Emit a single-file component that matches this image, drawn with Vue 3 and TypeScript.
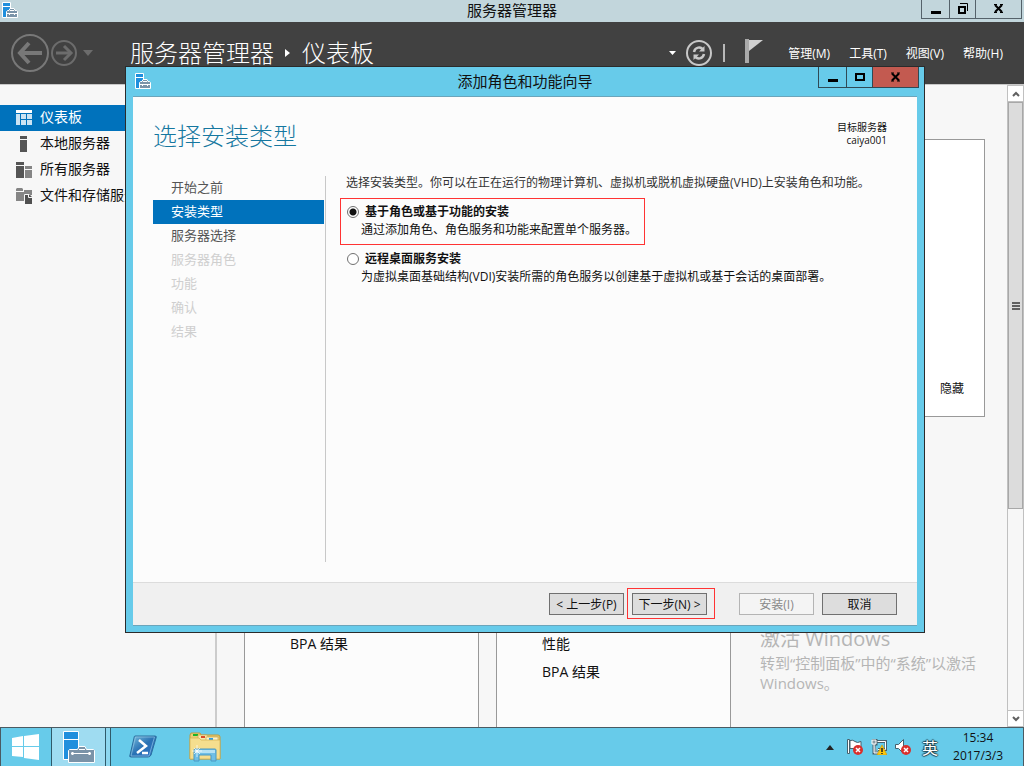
<script setup lang="ts">
import { ref } from 'vue'

interface Step {
  label: string
  disabled: boolean
}

interface InstallOption {
  id: string
  title: string
  description: string
}

const sidebar = [
  { icon: 'dashboard', label: '仪表板' },
  { icon: 'server', label: '本地服务器' },
  { icon: 'servers', label: '所有服务器' },
  { icon: 'storage', label: '文件和存储服务' },
]
const activePage = ref('dashboard')

const menus = ['管理(M)', '工具(T)', '视图(V)', '帮助(H)']

const steps: Step[] = [
  { label: '开始之前', disabled: false },
  { label: '安装类型', disabled: false },
  { label: '服务器选择', disabled: false },
  { label: '服务器角色', disabled: true },
  { label: '功能', disabled: true },
  { label: '确认', disabled: true },
  { label: '结果', disabled: true },
]
const currentStep = ref(1)

const options: InstallOption[] = [
  {
    id: 'role',
    title: '基于角色或基于功能的安装',
    description: '通过添加角色、角色服务和功能来配置单个服务器。',
  },
  {
    id: 'rds',
    title: '远程桌面服务安装',
    description: '为虚拟桌面基础结构(VDI)安装所需的角色服务以创建基于虚拟机或基于会话的桌面部署。',
  },
]
const selected = ref('role')

const tiles = [['BPA 结果'], ['性能', 'BPA 结果']]
</script>

<template>
  <div class="desktop">
    <svg class="defs" width="0" height="0" aria-hidden="true">
      <symbol id="manager-small" viewBox="0 0 16 16">
        <path d="M.5.5h8v15h-8z" fill="#1f8fdd" stroke="#fff" />
        <path d="M1 4.5h7" stroke="#fff" />
        <path d="M4.500 15.500V9.500l1-1h1.500l1-2h4l1 2h1.500l1 1v6z" fill="#7a93a8" stroke="#fff" />
        <path d="M5 11.500h10M7.500 11v2M12.500 11v2M8 8.500h4" stroke="#fff" fill="none" />
      </symbol>
    </svg>

    <header class="caption">
      <svg class="caption-icon" width="16" height="16"><use href="#manager-small" /></svg>
      <span class="caption-title">服务器管理器</span>
      <div class="window-buttons">
        <button class="wb min" aria-label="最小化"><svg width="12" height="12"><path d="M1 8h10v3H1z" /></svg></button>
        <button class="wb mid" aria-label="还原">
          <svg width="12" height="12"><path d="M2 4h6v6H2z" fill="none" stroke="#000" stroke-width="2" /><path d="M3 .5h7.500V8" fill="none" stroke="#000" /></svg>
        </button>
        <button class="wb close" aria-label="关闭">
          <svg width="12" height="12"><path d="M2 2l7 7M9 2l-7 7" stroke="#000" stroke-width="2" /><path d="M1 1.500h3M7 1.500h3M1 9.500h3M7 9.500h3" stroke="#000" stroke-width="1" /></svg>
        </button>
      </div>
    </header>

    <div class="toolbar">
      <button class="plain" aria-label="后退">
        <svg width="38" height="38" fill="none" stroke="#787878">
          <circle cx="19" cy="19" r="18" stroke-width="2" />
          <path d="M31 19H10" stroke-width="4" /><path d="M18 9L9 19l9 10" stroke-width="4" />
        </svg>
      </button>
      <button class="plain forward" aria-label="前进">
        <svg width="26" height="26" fill="none" stroke="#6c6c6c">
          <circle cx="13" cy="13" r="12" stroke-width="2" />
          <path d="M5 13h14" stroke-width="3" /><path d="M13 6l7 7-7 7" stroke-width="3" />
        </svg>
      </button>
      <button class="plain history" aria-label="历史记录">
        <svg width="10" height="6"><path d="M0 0h10L5 6z" fill="#6c6c6c" /></svg>
      </button>
      <div class="breadcrumb">
        <span>服务器管理器</span>
        <svg width="6" height="8"><path d="M0 0l5 4-5 4z" fill="#fff" /></svg>
        <span>仪表板</span>
      </div>
      <div class="tools">
        <button class="plain" aria-label="更多"><svg width="7" height="4"><path d="M0 0h7L3.500 4z" fill="#fff" /></svg></button>
        <button class="plain refresh" aria-label="刷新">
          <svg width="26" height="26" fill="none" stroke="#c8c8c8">
            <circle cx="13" cy="13" r="12" stroke-width="2" />
            <path d="M8 12c1-5 7-6 9-2M18 14c-1 5-7 6-9 2" stroke-width="2.500" />
            <path d="M18.500 6v5.500H13zM7.500 20v-5.500H13z" fill="#c8c8c8" stroke="none" />
          </svg>
        </button>
        <span class="divider"></span>
        <button class="plain flag" aria-label="通知">
          <svg width="18" height="24"><path d="M0 0h4v24H0z" fill="#aaa" /><path d="M4 1h14L4 12z" fill="#d0d0d0" /></svg>
        </button>
        <nav class="menus"><button v-for="m in menus" :key="m" class="plain">{{ m }}</button></nav>
      </div>
    </div>

    <div class="workspace">
      <nav class="sidebar">
        <button
          v-for="item in sidebar"
          :key="item.icon"
          class="side-item"
          :class="{ active: item.icon === activePage }"
          @click="activePage = item.icon"
        >
          <svg width="16" height="16">
            <g v-if="item.icon === 'dashboard'">
              <path d="M0 0h16v3H0z" fill="#fff" />
              <path d="M0 4h4v11H0zM5 4h5v5H5zM11 4h5v5h-5zM5 10h5v5H5zM11 10h5v5h-5z" fill="#cbe3f3" />
            </g>
            <path v-else-if="item.icon === 'server'" d="M4 0h7v3H4zM4 4h7v12H4z" fill="#555" />
            <g v-else-if="item.icon === 'servers'">
              <path d="M0 0h8v3H0zM0 4h8v12H0z" fill="#555" /><path d="M9 4h7v3H9zM9 8h7v8H9z" fill="#858585" />
            </g>
            <g v-else>
              <path d="M0 1l1-1h5l1 1v2H0zM0 4h8v9H0zM8 2h8v5H8z" fill="#858585" />
              <path d="M9 6h4l3 3v7H9z" fill="#505050" /><path d="M8.500 16V6.500h5M12.500 6v3.500H16" stroke="#f7f7f7" fill="none" />
            </g>
          </svg>
          <span>{{ item.label }}</span>
        </button>
      </nav>

      <main class="content">
        <section class="welcome"><button class="plain">隐藏</button></section>
        <section class="tiles">
          <ul v-for="(rows, i) in tiles" :key="i" class="tile">
            <li v-for="row in rows" :key="row">{{ row }}</li>
          </ul>
        </section>
        <aside class="activation">
          <h2>激活 Windows</h2>
          <p>转到“控制面板”中的“系统”以激活 Windows。</p>
        </aside>
      </main>

      <div class="scrollbar">
        <button class="scroll-button" aria-label="向上滚动"><svg width="8" height="6"><path d="M1 5l3-3 3 3" fill="none" stroke="#606060" stroke-width="2" /></svg></button>
        <div class="track">
          <div class="thumb"><svg width="8" height="8"><path d="M0 1h8M0 4h8M0 7h8" stroke="#606060" stroke-width="2" /></svg></div>
        </div>
        <button class="scroll-button" aria-label="向下滚动"><svg width="8" height="6"><path d="M1 1l3 3 3-3" fill="none" stroke="#606060" stroke-width="2" /></svg></button>
      </div>
    </div>

    <div class="dialog" role="dialog" aria-labelledby="wizard-title">
      <header class="dialog-caption">
        <svg class="dialog-icon" width="16" height="16"><use href="#manager-small" /></svg>
        <span id="wizard-title" class="dialog-title">添加角色和功能向导</span>
        <div class="window-buttons">
          <button class="wb min" aria-label="最小化"><svg width="12" height="12"><path d="M1 8h10v3H1z" /></svg></button>
          <button class="wb mid" aria-label="最大化"><svg width="12" height="12"><path d="M2 3h8v6H2z" fill="none" stroke="#000" stroke-width="2" /></svg></button>
          <button class="wb close red" aria-label="关闭">
            <svg width="12" height="12"><path d="M2 2.500l7 7M9 2.500l-7 7" stroke="#000" stroke-width="2" /><path d="M1 2h3M7 2h3M1 10h3M7 10h3" stroke="#000" stroke-width="1" /></svg>
          </button>
        </div>
      </header>

      <form class="client" @submit.prevent>
        <div class="page">
          <div class="page-head">
            <h1>选择安装类型</h1>
            <div class="target">目标服务器<br />caiya001</div>
          </div>
          <div class="page-body">
            <nav class="steps">
              <button
                v-for="(step, i) in steps"
                :key="step.label"
                type="button"
                class="step"
                :class="{ current: i === currentStep }"
                :disabled="step.disabled"
                @click="currentStep = i"
              >{{ step.label }}</button>
            </nav>
            <div class="pane">
              <p class="intro">选择安装类型。你可以在正在运行的物理计算机、虚拟机或脱机虚拟硬盘(VHD)上安装角色和功能。</p>
              <div v-for="o in options" :key="o.id" class="option" :class="{ marked: o.id === 'role' }">
                <div class="option-head">
                  <input :id="o.id" v-model="selected" type="radio" name="install" :value="o.id" />
                  <label :for="o.id">{{ o.title }}</label>
                </div>
                <p>{{ o.description }}</p>
              </div>
            </div>
          </div>
        </div>
        <footer class="actions">
          <button type="button" class="action">&lt; 上一步(P)</button>
          <div class="next-mark"><button type="submit" class="action">下一步(N) &gt;</button></div>
          <button type="button" class="action install" disabled>安装(I)</button>
          <button type="button" class="action">取消</button>
        </footer>
      </form>
    </div>

    <footer class="taskbar">
      <button class="task start" aria-label="开始">
        <svg width="28" height="26" fill="#fff"><path d="M0 4l11-2v10H0zM12 2l15-2v12H12zM0 13h11v10L0 22zM12 13h15v13l-15-2z" /></svg>
      </button>
      <button class="task running" aria-label="服务器管理器">
        <svg width="32" height="32">
          <path d="M.5.5h15v28H.5z" fill="#1f8fdd" stroke="#fff" /><path d="M0 8.500h16" stroke="#fff" />
          <path d="M5.500 19.500l1-1h8l1.500-3h6l1.500 3h7l1 1v12h-26z" fill="#7a93a8" stroke="#fff" />
          <path d="M16 18.500h6" stroke="#fff" /><path d="M8 22.500h20" stroke="#fff" /><path d="M9.500 21v3M26.500 21v3" stroke="#fff" stroke-width="2" />
        </svg>
      </button>
      <span class="stack"></span>
      <button class="task shell" aria-label="PowerShell">
        <svg width="28" height="24">
          <defs><linearGradient id="ps" x1="0" y1="0" x2="1" y2="1"><stop offset="0" stop-color="#7cc0de" /><stop offset=".5" stop-color="#2a72b4" /><stop offset="1" stop-color="#2f70c8" /></linearGradient></defs>
          <path d="M6 1h20q2 0 1 2l-5 17q-1 2-3 2H2q-2 0-1-2L5 3q0-2 1-2z" fill="url(#ps)" stroke="#2b6e9f" />
          <path d="M6.500 2h19L20 21H2z" fill="none" stroke="#9fd0ea" stroke-opacity=".6" />
          <path d="M10 5l7 6-9 7M13 18h6" fill="none" stroke="#fff" stroke-width="2.500" />
        </svg>
      </button>
      <button class="task explorer" aria-label="文件资源管理器">
        <svg width="32" height="30">
          <path d="M1 3l1-2h9l1 2h17q2 0 2 2v22H1z" fill="#e9cf76" stroke="#c09a3c" />
          <path d="M4 2h5v2H4z" fill="#18b52c" /><path d="M9 6V3h9l1 2h11v8H9z" fill="#f8e9ad" stroke="#cda94e" stroke-width=".7" />
          <path d="M12 4h4v2h-4z" fill="#dc4c28" /><path d="M17 8V5h12v4H17z" fill="#fbf3cd" stroke="#cda94e" stroke-width=".7" /><path d="M20 6h4v2h-4z" fill="#2b9fe5" />
          <path d="M1 6h9l2 2h19v19H1z" fill="#f5de8e" stroke="#d3b04f" stroke-width=".7" />
          <path d="M5 29V18q0-1 1-1h20q1 0 1 1v11h-5v-6H10v6z" fill="#6fbfe6" stroke="#4899c4" />
          <path d="M6 18h20v3H6z" fill="#b4e2f4" /><path d="M8 13v12M3 19h10M5 16l6 6M11 16l-6 6" stroke="#fff" stroke-opacity=".7" />
        </svg>
      </button>
      <div class="tray">
        <svg width="8" height="5"><path d="M0 5l4-5 4 5z" fill="#222" /></svg>
        <svg class="tray-icon" width="16" height="16">
          <path d="M.5.500h2v14h-2z" fill="#fff" stroke="#46606c" /><path d="M3 1.500q3-1 5 1t6 0v7H3z" fill="#fff" stroke="#46606c" />
          <circle cx="11" cy="11" r="5" fill="#d9302c" /><path d="M9 9l4 4M13 9l-4 4" stroke="#fff" stroke-width="1.500" />
        </svg>
        <svg class="tray-icon" width="16" height="16">
          <path d="M6 2.500h9v8H7" fill="none" stroke="#46606c" stroke-width="3" /><path d="M6 2.500h8.500v8H7M7 13.500h5" fill="none" stroke="#fff" />
          <path d="M1 1h4v4H3v9h4" fill="none" stroke="#46606c" stroke-width="3" /><path d="M1 1h4v4H1zM3 5v9h4" fill="#8a9ba4" stroke="#fff" />
          <path d="M11 6l5 10H6z" fill="#fdc80b" stroke="#d29900" stroke-width=".7" /><path d="M11 9v4M11 14v1" stroke="#222" stroke-width="1.500" />
        </svg>
        <svg class="tray-icon" width="16" height="16">
          <path d="M.5 5.500h3l5-5v14l-5-5h-3z" fill="#fff" stroke="#46606c" />
          <circle cx="11" cy="11" r="5" fill="#d9302c" /><path d="M9 9l4 4M13 9l-4 4" stroke="#fff" stroke-width="1.500" />
        </svg>
        <button class="plain ime">英</button>
        <div class="clock"><span>15:34</span><span>2017/3/3</span></div>
      </div>
    </footer>
  </div>
</template>

<style>
body {
  margin: 0;
}
</style>

<style scoped>
* {
  box-sizing: border-box;
}
.desktop {
  position: relative;
  display: flex;
  flex-direction: column;
  height: 100vh;
  overflow: hidden;
  background: #f7f7f7;
  color: #111;
  font-family: "Open Sans", "Noto Sans CJK SC", sans-serif;
  font-size: 12px;
}
.defs {
  position: absolute;
}
svg {
  display: block;
  flex: none;
}
button {
  font: inherit;
  color: inherit;
  padding: 0;
  margin: 0;
  border: 0;
  border-radius: 0;
  white-space: nowrap;
}
p,
h1,
h2,
ul {
  margin: 0;
  padding: 0;
}
.plain {
  background: none;
}

.caption,
.dialog-caption {
  display: grid;
  grid-template-columns: 1fr auto 1fr;
  align-items: start;
}
.caption {
  flex: none;
  height: 22px;
  padding: 0 2px;
  background: #c2d6dc;
}
.caption-icon {
  margin-top: 2px;
}
.caption-title,
.dialog-title {
  font-size: 15px;
  line-height: 20px;
}
.window-buttons {
  display: flex;
  justify-self: end;
}
.wb {
  display: flex;
  align-items: center;
  justify-content: center;
  height: 19px;
  background: transparent;
  border: solid #55626a;
  border-width: 0 1px 1px 0;
}
.wb.min {
  width: 29px;
  border-left-width: 1px;
}
.wb.mid {
  width: 26px;
}
.wb.close {
  width: 46px;
}

.toolbar {
  flex: none;
  display: flex;
  align-items: center;
  height: 62px;
  padding: 0 21px 0 11px;
  background: #414141;
  color: #fff;
}
.forward {
  margin-left: 2px;
}
.history {
  margin-left: 6px;
}
.breadcrumb {
  display: flex;
  align-items: center;
  gap: 11px;
  margin-left: 37px;
  font-size: 24px;
  line-height: 32px;
  font-weight: 300;
  white-space: nowrap;
}
.tools {
  display: flex;
  align-items: center;
  margin-left: auto;
}
.refresh {
  margin-left: 10px;
}
.divider {
  width: 2px;
  height: 18px;
  margin-left: 11px;
  background: #b8b8b8;
}
.flag {
  margin: 0 25px 4px 20px;
}
.menus {
  display: flex;
  gap: 19px;
}

.workspace {
  flex: 1;
  min-height: 0;
  display: flex;
  border-top: 1px solid #c8c8c8;
}
.sidebar {
  flex: none;
  width: 217px;
  padding-top: 20px;
  border-right: 2px solid #ccc;
}
.side-item {
  display: flex;
  align-items: center;
  gap: 8px;
  width: 100%;
  height: 26px;
  padding-left: 16px;
  background: transparent;
  font-size: 14px;
  line-height: 20px;
}
.side-item span {
  padding-bottom: 2px;
}
.side-item.active {
  background: #0072bc;
  color: #fff;
}
.content {
  position: relative;
  flex: 1;
  min-width: 0;
  display: flex;
  flex-direction: column;
  padding: 54px 22px 0 27px;
}
.welcome {
  flex: none;
  display: flex;
  align-items: flex-end;
  justify-content: flex-end;
  height: 278px;
  padding: 19px 20px;
  background: #fff;
  border: 1px solid #999;
}
.tiles {
  flex: 1;
  display: grid;
  grid-template-columns: repeat(3, 1fr);
  gap: 17px;
  margin-top: 40px;
  padding-right: 2px;
}
.tile {
  list-style: none;
  padding: 172px 0 0 45px;
  background: #fcfcfc;
  border: solid #999;
  border-width: 1px 1px 0;
  font-size: 14px;
  line-height: 28px;
}
.activation {
  position: absolute;
  right: 22px;
  bottom: 34px;
  width: 225px;
  color: #b5b5b5;
  font-size: 15px;
  line-height: 20px;
}
.activation h2 {
  font-size: 20px;
  line-height: 28px;
  font-weight: 400;
}

.scrollbar {
  flex: none;
  display: flex;
  flex-direction: column;
  width: 17px;
  border: solid #c0c0c0;
  border-width: 0 1px;
}
.scroll-button {
  flex: none;
  display: flex;
  align-items: center;
  justify-content: center;
  height: 17px;
  background: #fff;
  border: solid #c0c0c0;
  border-width: 1px 0;
}
.track {
  flex: 1;
}
.thumb {
  display: flex;
  align-items: center;
  justify-content: center;
  height: 67%;
  background: #dcdcdc;
  border: 1px solid #a8a8a8;
}

.dialog {
  position: absolute;
  top: 66px;
  right: 99px;
  bottom: 133px;
  left: 125px;
  display: flex;
  flex-direction: column;
  padding: 0 7px 6px;
  background: #67cbea;
  border: 1px solid #2b2b2b;
}
.dialog-caption {
  flex: none;
  height: 29px;
}
.dialog-icon {
  margin: 6px 0 0 2px;
}
.dialog-title {
  padding-top: 4px;
}
.dialog-caption .window-buttons {
  margin-right: -2px;
}
.dialog-caption .wb {
  height: 21px;
  border-color: #2f4a55;
}
.dialog-caption .wb.red {
  background: #c35a50;
}
.client {
  flex: 1;
  min-height: 0;
  display: flex;
  flex-direction: column;
  border: solid #6ba5bb;
  border-width: 1px 0;
}
.page {
  flex: 1;
  display: flex;
  flex-direction: column;
  padding: 24px 20px 20px;
  background: #fcfcfc;
}
.page-head {
  display: flex;
  justify-content: space-between;
  padding-right: 10px;
}
.page-head h1 {
  color: #1577a0;
  font-size: 24px;
  line-height: 30px;
  font-weight: 300;
}
.target {
  font-size: 10px;
  line-height: 13px;
  text-align: right;
}
.page-body {
  flex: 1;
  display: flex;
  margin-top: 25px;
}
.steps {
  flex: none;
  width: 173px;
  padding-right: 1px;
  border-right: 1px solid #c8c8c8;
}
.step {
  display: block;
  width: 100%;
  height: 24px;
  padding: 0 0 2px 18px;
  background: transparent;
  color: #555;
  font-size: 13px;
  line-height: 22px;
  text-align: left;
}
.step:disabled {
  color: #cfcfcf;
}
.step.current {
  background: #0072bc;
  color: #fff;
}
.pane {
  flex: 1;
  min-width: 0;
  padding-left: 14px;
}
.intro {
  margin-bottom: 8px;
  padding-left: 6px;
  color: #333;
  line-height: 14px;
}
.option {
  width: fit-content;
  padding: 4px 7px 5px 6px;
  border: 1px solid transparent;
  line-height: 18px;
}
.option.marked {
  border-color: #f33;
}
.option-head {
  display: flex;
  align-items: center;
  gap: 6px;
  font-weight: 700;
}
.option-head input {
  appearance: none;
  width: 12px;
  height: 12px;
  margin: 0;
  background: #fff;
  border: 1px solid #707070;
  border-radius: 50%;
}
.option-head input:checked {
  background: radial-gradient(circle, #111 3px, #fff 4px);
}
.option p {
  padding-left: 14px;
}
.actions {
  flex: none;
  display: flex;
  align-items: center;
  justify-content: flex-end;
  height: 43px;
  padding: 0 20px 1px 0;
  background: #f0f0f0;
  border-top: 1px solid #dcdcdc;
}
.action {
  width: 75px;
  height: 22px;
  background: #ddd;
  border: 1px solid #707070;
}
.action:disabled {
  background: #f4f4f4;
  border-color: #b4b4b4;
  color: #888;
}
.next-mark {
  display: flex;
  margin-left: 3px;
  padding: 4px 7px 3px 4px;
  border: 1px solid #f33;
}
.action.install {
  margin: 0 8px 0 24px;
}

.taskbar {
  flex: none;
  display: flex;
  height: 39px;
  background: #67cbea;
  border: solid #4a5a62;
  border-width: 1px 1px 0;
}
.task {
  display: flex;
  align-items: center;
  justify-content: center;
  background: transparent;
}
.start {
  width: 50px;
}
.running {
  width: 55px;
  background: #9fdcf1;
  border: solid #2f5a6a;
  border-width: 0 1px;
}
.stack {
  width: 5px;
  background: #8dd7ef;
  border-right: 1px solid #2f5a6a;
}
.shell {
  width: 64px;
}
.explorer {
  width: 60px;
}
.tray {
  display: flex;
  align-items: center;
  margin-left: auto;
  padding-right: 20px;
}
.tray-icon {
  margin-left: 8px;
}
.tray-icon:nth-child(2) {
  margin-left: 13px;
}
.ime {
  margin: 0 15px 0 11px;
  color: #fff;
  font-size: 16px;
  text-shadow: 0 1px 1px #23444f, 0 -1px 1px #23444f, 1px 0 1px #23444f, -1px 0 1px #23444f;
}
.clock {
  display: flex;
  flex-direction: column;
  align-items: center;
  line-height: 18px;
}
</style>
